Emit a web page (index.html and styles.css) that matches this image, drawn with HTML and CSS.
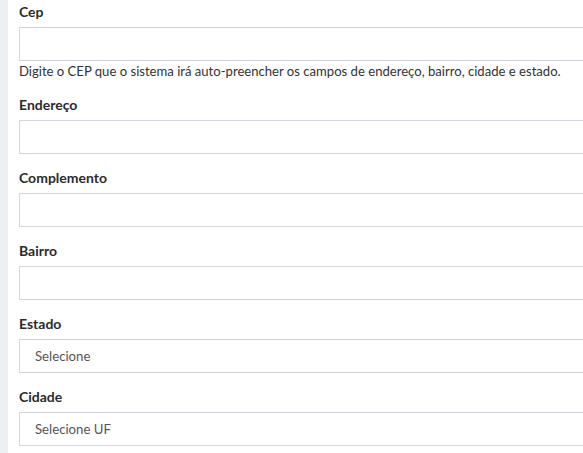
FILE: index.html
```html
<!DOCTYPE html>
<html lang="pt-BR">
<head>
<meta charset="utf-8">
<title>Endereço</title>
<link rel="stylesheet" href="styles.css">
</head>
<body>
<div class="page">
  <div class="box">
    <div class="field">
      <label class="label" for="cep">Cep</label>
      <input class="control" id="cep" type="text">
      <p class="help">Digite o CEP que o sistema irá auto-preencher os campos de endereço, bairro, cidade e estado.</p>
    </div>
    <div class="field">
      <label class="label" for="endereco">Endereço</label>
      <input class="control" id="endereco" type="text">
    </div>
    <div class="field">
      <label class="label" for="complemento">Complemento</label>
      <input class="control" id="complemento" type="text">
    </div>
    <div class="field">
      <label class="label" for="bairro">Bairro</label>
      <input class="control" id="bairro" type="text">
    </div>
    <div class="field">
      <label class="label" for="estado">Estado</label>
      <select class="control select" id="estado"><option>Selecione</option></select>
    </div>
    <div class="field">
      <label class="label" for="cidade">Cidade</label>
      <select class="control select" id="cidade"><option>Selecione UF</option></select>
    </div>
  </div>
</div>
</body>
</html>
```
FILE: styles.css
```css
html, body {
  margin: 0;
  padding: 0;
  background: #ecf0f5;
  overflow: hidden;
}
.page {
  padding-left: 8px;
}
.box {
  background: #ffffff;
  padding: 2px 0 0 11px;
  min-height: 460px;
  width: 640px;
  box-sizing: border-box;
  display: flex;
  flex-direction: column;
  font-family: "Lato", "Open Sans", sans-serif;
  font-size: 14px;
  color: #333333;
}
.field {
  display: flex;
  flex-direction: column;
  margin-bottom: 14px;
}
.label {
  font-weight: 700;
  line-height: 20px;
  margin-bottom: 5px;
  color: #2b2b2b;
}
.control {
  display: block;
  height: 34px;
  box-sizing: border-box;
  width: 620px;
  border: 1px solid #d2d6de;
  border-radius: 0;
  background: #ffffff;
  font-family: inherit;
  font-size: 13.2px;
  color: #555555;
  padding: 6px 15px;
  margin: 0;
  outline: none;
}
.select {
  appearance: none;
  -webkit-appearance: none;
}
.help {
  margin: 0;
  font-size: 13.1px;
  line-height: 20px;
  color: #333333;
}
```
